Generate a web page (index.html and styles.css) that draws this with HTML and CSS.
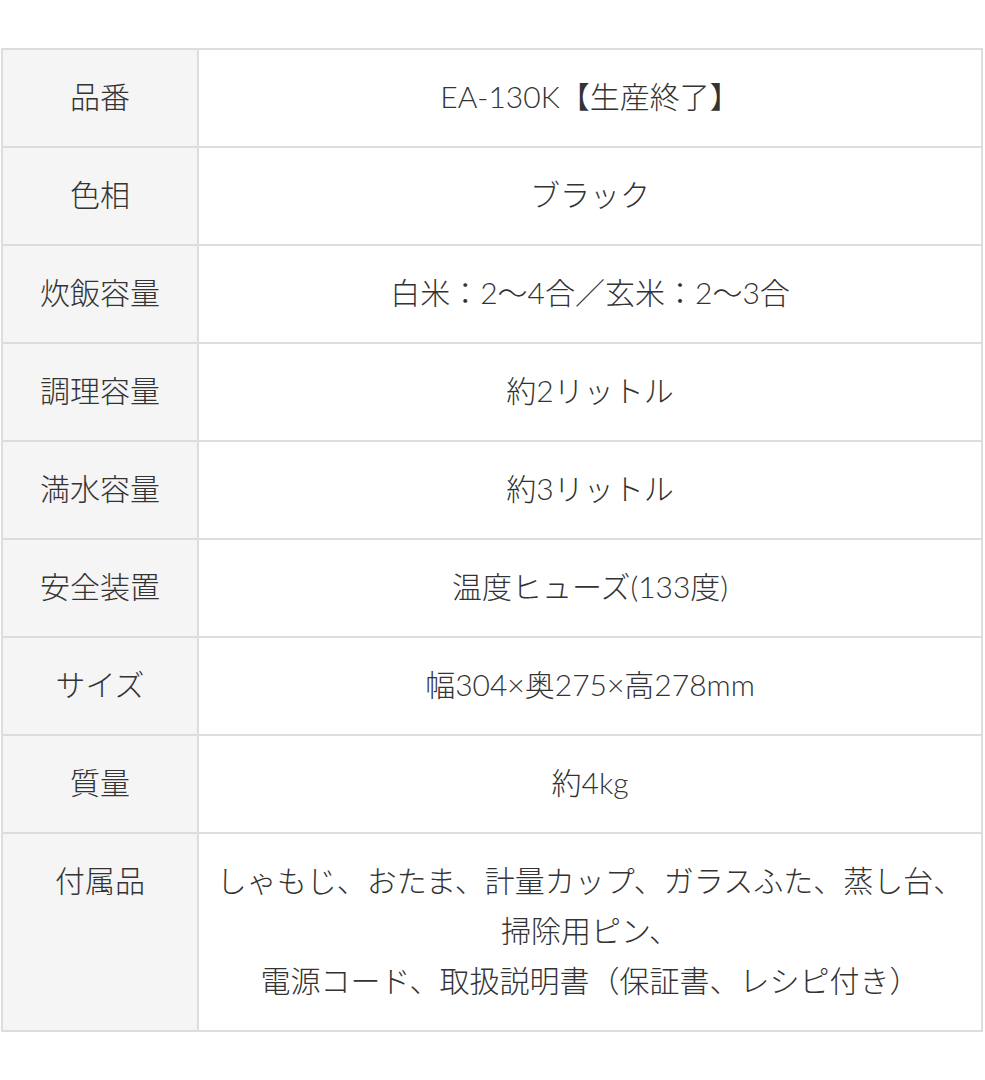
FILE: index.html
```html
<!DOCTYPE html>
<html lang="ja">
<head>
<meta charset="utf-8">
<title>仕様</title>
<link rel="stylesheet" href="styles.css">
</head>
<body>
<div class="page">
  <table class="spec">
    <tbody>
      <tr><th>品番</th><td>EA-130K【生産終了】</td></tr>
      <tr><th>色相</th><td>ブラック</td></tr>
      <tr><th>炊飯容量</th><td>白米：2～4合／玄米：2～3合</td></tr>
      <tr><th>調理容量</th><td>約2リットル</td></tr>
      <tr><th>満水容量</th><td>約3リットル</td></tr>
      <tr><th>安全装置</th><td>温度ヒューズ(133度)</td></tr>
      <tr><th>サイズ</th><td>幅304×奥275×高278mm</td></tr>
      <tr><th>質量</th><td>約4kg</td></tr>
      <tr><th class="top">付属品</th><td>しゃもじ、おたま、計量カップ、ガラスふた、蒸し台、<br>掃除用ピン、<br>電源コード、取扱説明書（保証書、レシピ付き）</td></tr>
    </tbody>
  </table>
</div>
</body>
</html>
```

FILE: styles.css
```css
html, body {
  margin: 0;
  padding: 0;
  background: #ffffff;
}

.page {
  padding: 48px 0 0 1px;
}

.spec {
  width: 982px;
  border-collapse: collapse;
  font-family: "Lato", "Noto Sans CJK JP", sans-serif;
  font-size: 30px;
  color: #333333;
  table-layout: fixed;
}

.spec th,
.spec td {
  border: 2px solid #dddddd;
  padding: 21px 4px 25px;
  line-height: 50px;
  text-align: center;
  vertical-align: middle;
  font-weight: 300;
}

.spec th {
  width: 186px;
  background: #f5f5f5;
}

.spec th.top {
  vertical-align: top;
}
```
